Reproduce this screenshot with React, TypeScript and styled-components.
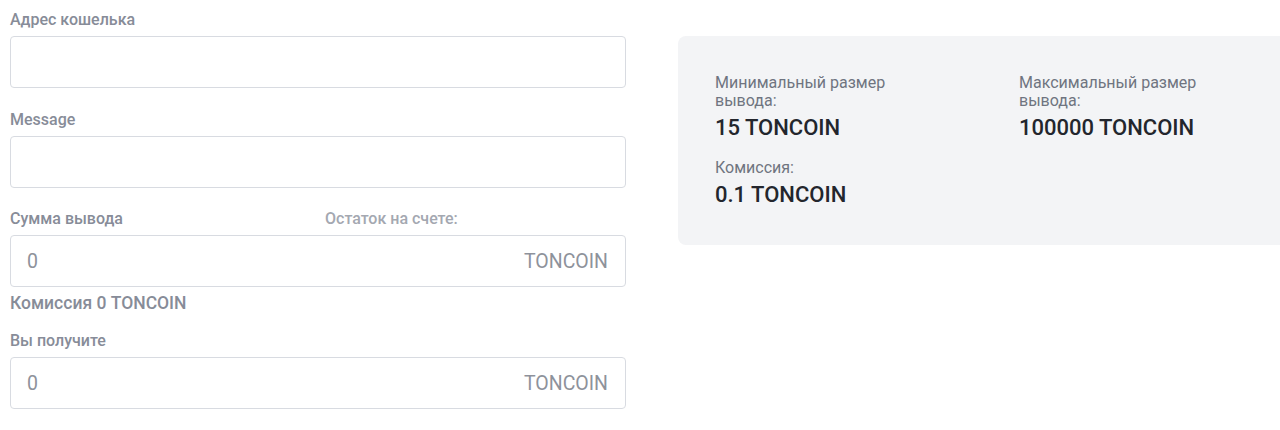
import React from "react";
import styled, { createGlobalStyle } from "styled-components";

const Global = createGlobalStyle`
  html, body { margin: 0; padding: 0; background: #ffffff; overflow: hidden; }
  body { font-family: Roboto, "Noto Sans", Arial, sans-serif; }
  * { box-sizing: border-box; }
`;

const Page = styled.div`
  display: grid;
  grid-template-columns: 616px 640px;
  column-gap: 52px;
  align-items: start;
  padding: 11px 0 0 10px;
  width: 1400px;
`;

const Form = styled.div`
  display: flex;
  flex-direction: column;
`;

const Field = styled.div<{ $gap?: number }>`
  display: flex;
  flex-direction: column;
  margin-top: ${(p) => p.$gap ?? 0}px;
`;

const LabelRow = styled.div`
  display: grid;
  grid-template-columns: 315px 1fr;
  margin-bottom: 8px;
`;

const Label = styled.span<{ $muted?: boolean }>`
  font-size: 16px;
  line-height: 17px;
  font-weight: 500;
  color: ${(p) => (p.$muted ? "#a4a8b1" : "#878c98")};
`;

const InputBox = styled.div`
  height: 52px;
  border: 1px solid #d8dbe1;
  border-radius: 4px;
  background: #fff;
  display: flex;
  align-items: center;
  justify-content: space-between;
  padding: 0 17px 0 16px;
  font-size: 19.5px;
  color: #8e929b;
`;

const Note = styled.div`
  margin-top: 8px;
  font-size: 17.5px;
  line-height: 16px;
  font-weight: 500;
  color: #878c98;
`;

const Panel = styled.div`
  margin-top: 25px;
  background: #f3f4f6;
  border-radius: 8px;
  padding: 38px 37px 37px;
  display: grid;
  grid-template-columns: 304px 304px;
  row-gap: 18px;
`;

const Stat = styled.div`
  display: flex;
  flex-direction: column;
  width: 220px;
`;

const StatLabel = styled.span`
  font-size: 16px;
  line-height: 18px;
  color: #6f7480;
`;

const StatValue = styled.span`
  margin-top: 5px;
  font-size: 22px;
  line-height: 26px;
  font-weight: 500;
  color: #23262d;
  white-space: nowrap;
`;

export default function App() {
  return (
    <>
      <Global />
      <Page>
        <Form>
          <Field>
            <LabelRow>
              <Label>Адрес кошелька</Label>
            </LabelRow>
            <InputBox />
          </Field>
          <Field $gap={23}>
            <LabelRow>
              <Label>Message</Label>
            </LabelRow>
            <InputBox />
          </Field>
          <Field $gap={22}>
            <LabelRow>
              <Label>Сумма вывода</Label>
              <Label $muted>Остаток на счете:</Label>
            </LabelRow>
            <InputBox>
              <span>0</span>
              <span>TONCOIN</span>
            </InputBox>
          </Field>
          <Note>Комиссия 0 TONCOIN</Note>
          <Field $gap={21}>
            <LabelRow>
              <Label>Вы получите</Label>
            </LabelRow>
            <InputBox>
              <span>0</span>
              <span>TONCOIN</span>
            </InputBox>
          </Field>
        </Form>
        <Panel>
          <Stat>
            <StatLabel>Минимальный размер вывода:</StatLabel>
            <StatValue>15 TONCOIN</StatValue>
          </Stat>
          <Stat>
            <StatLabel>Максимальный размер вывода:</StatLabel>
            <StatValue>100000 TONCOIN</StatValue>
          </Stat>
          <Stat>
            <StatLabel>Комиссия:</StatLabel>
            <StatValue>0.1 TONCOIN</StatValue>
          </Stat>
        </Panel>
      </Page>
    </>
  );
}
